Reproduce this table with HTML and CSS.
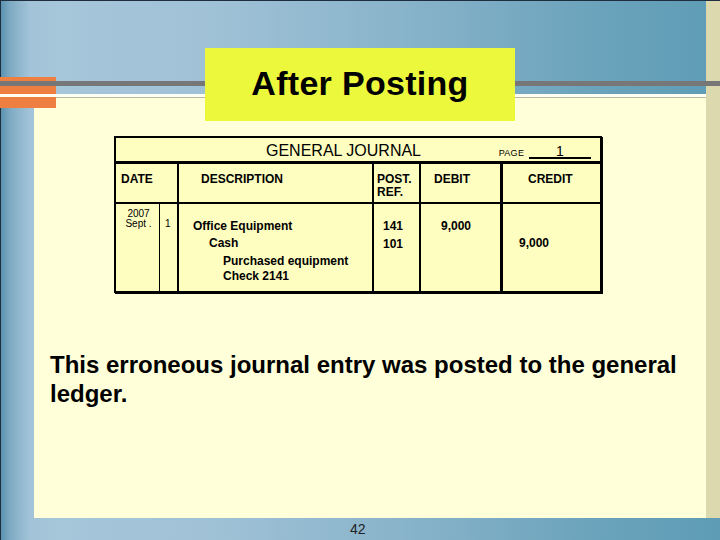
FILE: index.html
```html
<!DOCTYPE html>
<html>
<head>
<meta charset="utf-8">
<link rel="stylesheet" href="styles.css">
</head>
<body>
<div class="slide">
  <div class="deco-orange"></div>
  <main class="panel">
    <div class="title-box">After Posting</div>
    <div class="journal">
      <div class="j-title">
        <span class="j-name">GENERAL JOURNAL</span>
        <span class="j-page">PAGE <span class="j-num">1</span></span>
      </div>
      <div class="j-grid">
        <div class="h c-date">DATE</div>
        <div class="h c-desc">DESCRIPTION</div>
        <div class="h c-post">POST.<br>REF.</div>
        <div class="h c-debit">DEBIT</div>
        <div class="h c-credit">CREDIT</div>

        <div class="b b-year">2007<br>Sept .</div>
        <div class="b b-day">1</div>
        <div class="b b-desc">
          <div class="l1">Office Equipment</div>
          <div class="l2">Cash</div>
          <div class="l3">Purchased equipment<br>Check 2141</div>
        </div>
        <div class="b b-post">141<br>101</div>
        <div class="b b-debit">9,000</div>
        <div class="b b-credit">9,000</div>
      </div>
    </div>
    <p class="note">This erroneous journal entry was posted to the general ledger.</p>
  </main>
  <footer class="footer">42</footer>
</div>
</body>
</html>
```
FILE: styles.css
```css
html, body {
  margin: 0;
  padding: 0;
}
body {
  width: 720px;
  height: 540px;
  overflow: hidden;
  font-family: "Liberation Sans", Arial, sans-serif;
}
.slide {
  position: relative;
  width: 720px;
  height: 540px;
  box-sizing: border-box;
  padding: 97px 14px 0 34px;
  overflow: hidden;
  background:
    linear-gradient(#1e2e3e, #1e2e3e) 0 0 / 100% 1px no-repeat,
    linear-gradient(#1e2e3e, #1e2e3e) 0 0 / 1px 100% no-repeat,
    linear-gradient(#777777, #777777) 0 81px / 100% 5px no-repeat,
    linear-gradient(#fffff2, #fffff2) 0 94px / 706px 3px no-repeat,
    linear-gradient(#dcd9ae, #dcd9ae) 706px 0 / 14px 518px no-repeat,
    linear-gradient(to right, #5690ae 0, #7eaac3 10px, #a3c4d8 30px, #a6c6da 60px, #9fc1d6 220px, #86b2c9 420px, #6aa3bb 600px, #5e9cb5 720px);
}
.deco-orange {
  position: absolute;
  left: 0;
  top: 77px;
  width: 56px;
  height: 31px;
  background:
    linear-gradient(#777777, #777777) 0 4px / 100% 5px no-repeat,
    linear-gradient(#fffff2, #fffff2) 0 17px / 100% 3px no-repeat,
    #ef7f41;
}
.panel {
  display: block;
  height: 421px;
  box-sizing: border-box;
  border-top: 1px solid #b8b8a4;
  background: #ffffda;
}
.title-box {
  margin: -50px 0 0 171px;
  width: 310px;
  height: 73px;
  background: #ecf83b;
  text-align: center;
  font-weight: bold;
  font-size: 34px;
  letter-spacing: 0.3px;
  line-height: 71px;
  color: #000;
}
.journal {
  margin: 15px 0 0 80px;
  width: 484px;
  border: 2px solid #000;
  box-shadow: 1px 1px 0 #000;
  background: #fefec0;
  color: #000;
}
.j-title {
  display: flex;
  align-items: baseline;
  height: 23px;
  box-sizing: border-box;
  padding: 3px 9px 0 150px;
  border-bottom: 3px solid #000;
  height: 26px;
}
.j-name {
  font-size: 16px;
  line-height: 20px;
}
.j-page {
  margin-left: auto;
  font-size: 9px;
  line-height: 11px;
  letter-spacing: 0.3px;
}
.j-num {
  display: inline-block;
  width: 62px;
  margin-left: 2px;
  text-align: center;
  font-size: 14px;
  line-height: 11px;
  border-bottom: 2px solid #000;
  letter-spacing: 0;
}
.j-grid {
  display: grid;
  grid-template-columns: 44px 19px 195px 47px 82px 97px;
  grid-template-rows: 40px 87px;
  font-size: 12px;
  font-weight: bold;
}
.j-grid > div {
  box-sizing: border-box;
}
.h {
  border-bottom: 2px solid #000;
  border-right: 2px solid #000;
  padding-top: 9px;
  line-height: 13px;
}
.c-date {
  grid-column: span 2;
  padding-left: 5px;
}
.c-desc { padding-left: 22px; }
.c-post { padding-left: 3px; }
.c-debit { padding-left: 13px; border-right-width: 3px; }
.c-credit { padding-left: 25px; border-right: 0; }

.b {
  border-right: 2px solid #000;
}
.b-year {
  border-right-width: 1px;
  font-weight: normal;
  font-size: 10px;
  line-height: 9.5px;
  text-align: center;
  padding-top: 5px;
  padding-left: 2px;
}
.b-day {
  font-weight: normal;
  font-size: 10px;
  line-height: 9.5px;
  padding: 14.5px 0 0 5px;
}
.b-desc {
  padding-top: 14px;
  line-height: 17px;
}
.b-desc .l1 { padding-left: 14px; }
.b-desc .l2 { padding-left: 30px; }
.b-desc .l3 { padding-left: 44px; margin-top: 2px; line-height: 15px; }
.b-post {
  padding: 14px 0 0 9px;
  line-height: 17.5px;
}
.b-debit {
  border-right-width: 3px;
  padding: 14px 0 0 20px;
  line-height: 17px;
}
.b-credit {
  border-right: 0;
  padding: 31px 0 0 16px;
  line-height: 17px;
}
.note {
  margin: 57px 0 0 16px;
  width: 650px;
  font-size: 24px;
  font-weight: bold;
  line-height: 29px;
  color: #000;
}
.footer {
  height: 22px;
  padding-left: 316px;
  font-size: 14px;
  line-height: 22px;
  color: #222;
}
```
